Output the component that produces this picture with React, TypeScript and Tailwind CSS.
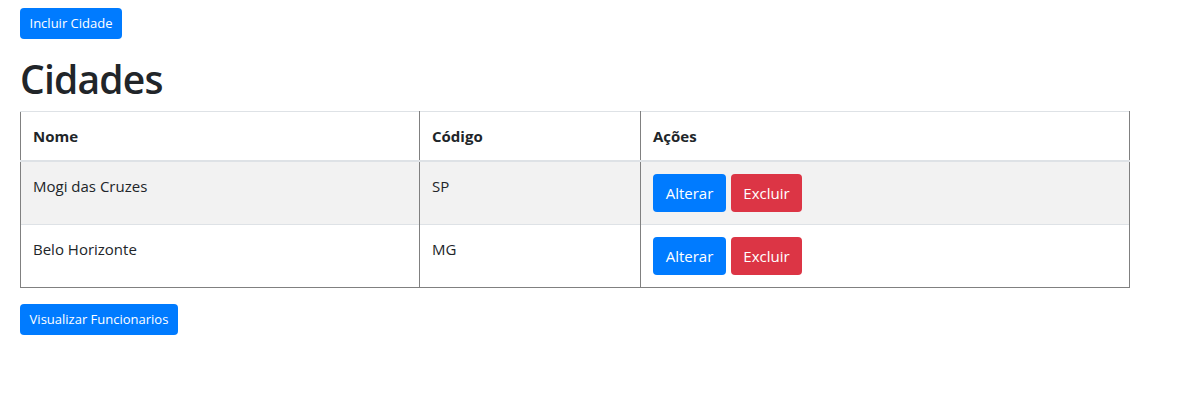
const cidades = [
  { nome: 'Mogi das Cruzes', codigo: 'SP' },
  { nome: 'Belo Horizonte', codigo: 'MG' },
];

const App = () => {
  return (
    <div className="min-h-screen bg-white px-5 pt-2 text-[#212529] font-['Open_Sans',sans-serif]">
      <button className="h-[31px] w-[102px] rounded bg-[#007bff] text-[13px] text-white">
        Incluir Cidade
      </button>

      <h1 className="mt-4 mb-2 text-[39px] leading-[48px] font-semibold tracking-[-0.8px]">Cidades</h1>

      <table className="w-[1110px] border-collapse text-[15px] leading-6">
        <thead>
          <tr>
            <th className="w-[399px] border-x border-x-[#808080] border-t border-t-[#dee2e6] border-b-2 border-b-[#dee2e6] p-3 text-left font-bold">
              Nome
            </th>
            <th className="w-[221px] border-x border-x-[#808080] border-t border-t-[#dee2e6] border-b-2 border-b-[#dee2e6] p-3 text-left font-bold">
              Código
            </th>
            <th className="border-x border-x-[#808080] border-t border-t-[#dee2e6] border-b-2 border-b-[#dee2e6] p-3 text-left font-bold">
              Ações
            </th>
          </tr>
        </thead>
        <tbody>
          {cidades.map((c, idx) => (
            <tr key={c.codigo} className={idx % 2 === 0 ? 'bg-[#f2f2f2]' : 'bg-white'}>
              <td
                className={`border-x border-x-[#808080] border-t border-t-[#dee2e6] p-3 align-top ${
                  idx === cidades.length - 1 ? 'border-b border-b-[#808080]' : ''
                }`}
              >
                {c.nome}
              </td>
              <td
                className={`border-x border-x-[#808080] border-t border-t-[#dee2e6] p-3 align-top ${
                  idx === cidades.length - 1 ? 'border-b border-b-[#808080]' : ''
                }`}
              >
                {c.codigo}
              </td>
              <td
                className={`border-x border-x-[#808080] border-t border-t-[#dee2e6] p-3 align-top ${
                  idx === cidades.length - 1 ? 'border-b border-b-[#808080]' : ''
                }`}
              >
                <div className="flex gap-[5px]">
                  <button className="h-[38px] w-[73px] rounded bg-[#007bff] text-[15px] text-white">Alterar</button>
                  <button className="h-[38px] w-[71px] rounded bg-[#dc3545] text-[15px] text-white">Excluir</button>
                </div>
              </td>
            </tr>
          ))}
        </tbody>
      </table>

      <button className="mt-4 h-[31px] w-[158px] rounded bg-[#007bff] text-[13px] text-white">
        Visualizar Funcionarios
      </button>
    </div>
  );
};

export default App;
